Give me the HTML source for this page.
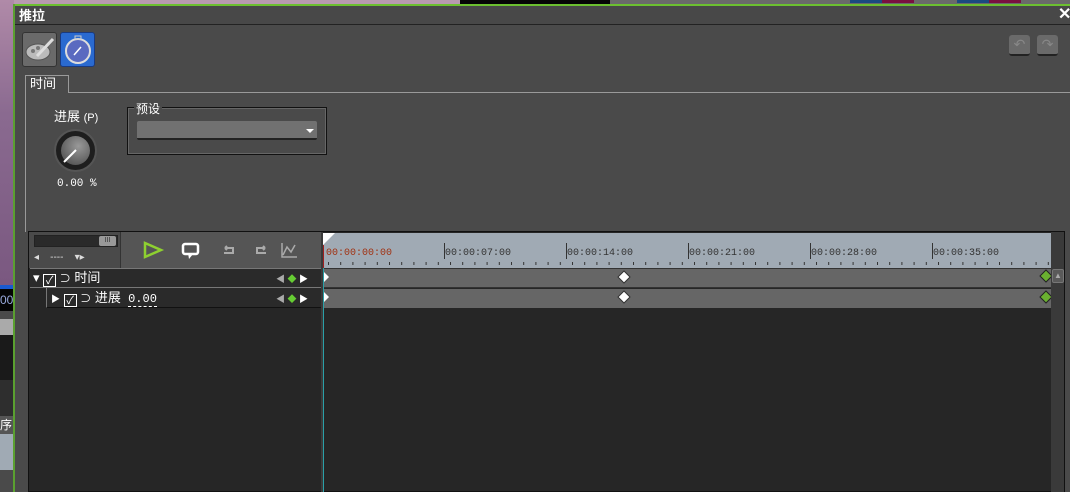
<!DOCTYPE html>
<html><head><meta charset="utf-8"><style>
*{margin:0;padding:0;box-sizing:border-box}
body{width:1070px;height:492px;overflow:hidden;background:#4a4a4a;position:relative;font-family:"Liberation Sans","Noto Sans CJK SC",sans-serif;color:#fff;font-size:12px}
.a{position:absolute}
</style></head><body>
<div class="a" style="left:0;top:0;width:460px;height:5px;background:#b89ab0"></div>
<div class="a" style="left:460px;top:0;width:150px;height:5px;background:#050505"></div>
<div class="a" style="left:610px;top:0;width:460px;height:5px;background:#6a6a6a"></div>
<div class="a" style="left:850px;top:0;width:32px;height:3px;background:#1a4a80"></div>
<div class="a" style="left:882px;top:0;width:32px;height:3px;background:#7a1040"></div>
<div class="a" style="left:957px;top:0;width:32px;height:3px;background:#1a4a80"></div>
<div class="a" style="left:989px;top:0;width:32px;height:3px;background:#7a1040"></div>
<div class="a" style="left:0;top:0;width:14px;height:285px;background:linear-gradient(#b08aa8,#8a6a90 40%,#7a5880)"></div>
<div class="a" style="left:0;top:285px;width:14px;height:4px;background:#1a5ad0"></div>
<div class="a" style="left:0;top:289px;width:14px;height:22px;background:#050505;color:#9ad;font-size:12px;line-height:22px">00</div>
<div class="a" style="left:0;top:311px;width:14px;height:8px;background:#4a4a4a"></div>
<div class="a" style="left:0;top:319px;width:14px;height:16px;background:#aaa"></div>
<div class="a" style="left:0;top:335px;width:14px;height:45px;background:#1a1a1a"></div>
<div class="a" style="left:0;top:380px;width:14px;height:36px;background:#2e2e2e"></div>
<div class="a" style="left:0;top:416px;width:14px;height:18px;background:#555;font-size:12px">序</div>
<div class="a" style="left:0;top:434px;width:14px;height:36px;background:#a0aab4"></div>
<div class="a" style="left:0;top:470px;width:14px;height:22px;background:#4a4a4a"></div>
<div class="a" style="left:13px;top:4px;width:1057px;height:2px;background:#6cc030"></div>
<div class="a" style="left:13px;top:4px;width:2px;height:488px;background:#5aa030"></div>
<div class="a" style="left:15px;top:6px;width:1055px;height:19px;background:#484848;border-bottom:1px solid #222"></div>
<div class="a" style="left:19px;top:6px;font-weight:bold;font-size:13px;line-height:19px">推拉</div>
<div class="a" style="left:1058px;top:5px;font-weight:bold;font-size:16px;line-height:19px">✕</div>
<div class="a" style="left:22px;top:32px;width:35px;height:35px;background:#6a6a6a;border:1px solid #333;border-radius:3px">
<svg width="33" height="33"><ellipse cx="15" cy="19" rx="12" ry="8" fill="#bbb" stroke="#555"/><circle cx="10" cy="18" r="2" fill="#777"/><circle cx="15" cy="15" r="2" fill="#777"/><line x1="14" y1="23" x2="30" y2="6" stroke="#ddd" stroke-width="3"/></svg></div>
<div class="a" style="left:60px;top:32px;width:35px;height:35px;background:#2a6ad0;border:1px solid #1a3a80;border-radius:3px">
<svg width="33" height="33"><circle cx="17" cy="18" r="12" fill="#5a6ac0" stroke="#ddd" stroke-width="2"/><line x1="13" y1="22" x2="20" y2="14" stroke="#fff" stroke-width="1.5"/><rect x="14" y="3" width="6" height="3" fill="none" stroke="#ccc"/></svg></div>
<div class="a" style="left:1009px;top:35px;width:21px;height:21px;background:#6a6a6a;border-radius:3px;border-bottom:2px solid #222;color:#888;text-align:center;font-size:14px;line-height:19px">↶</div>
<div class="a" style="left:1037px;top:35px;width:21px;height:21px;background:#6a6a6a;border-radius:3px;border-bottom:2px solid #222;color:#888;text-align:center;font-size:14px;line-height:19px">↷</div>
<div class="a" style="left:25px;top:92px;width:1045px;height:1px;background:#9a9a9a"></div>
<div class="a" style="left:25px;top:75px;width:44px;height:18px;background:#4a4a4a;border:1px solid #9a9a9a;border-bottom:none;padding-left:4px;line-height:16px;font-size:13px">时间</div>
<div class="a" style="left:25px;top:93px;width:1px;height:139px;background:#9a9a9a"></div>
<div class="a" style="left:54px;top:106px;font-size:13px">进展 <span style="font-size:11px">(P)</span></div>
<div class="a" style="left:54px;top:129px;width:43px;height:43px;border-radius:50%;background:#1e1e1e;border:2px solid #555"></div>
<div class="a" style="left:61px;top:136px;width:29px;height:29px;border-radius:50%;background:radial-gradient(circle at 60% 35%,#999,#444)"></div>
<svg class="a" style="left:54px;top:129px" width="43" height="43"><line x1="10" y1="33" x2="22" y2="21" stroke="#fff" stroke-width="2"/></svg>
<div class="a" style="left:57px;top:178px;font-family:'Liberation Mono',monospace;font-size:11px">0.00 %</div>
<div class="a" style="left:127px;top:107px;width:200px;height:48px;border:1px solid #111;outline:1px solid #666;outline-offset:-2px"></div>
<div class="a" style="left:134px;top:100px;background:#4a4a4a;padding:0 2px;font-size:12px">预设</div>
<div class="a" style="left:137px;top:121px;width:180px;height:19px;background:#717171;border-radius:2px;border-bottom:2px solid #222"></div>
<div class="a" style="left:306px;top:129px;width:0;height:0;border-left:4px solid transparent;border-right:4px solid transparent;border-top:4px solid #fff"></div>
<div class="a" style="left:28px;top:231px;width:1037px;height:261px;background:#262626;border:1px solid #111"></div>
<div class="a" style="left:29px;top:232px;width:292px;height:36px;background:#555"></div>
<div class="a" style="left:29px;top:232px;width:92px;height:36px;background:#4a4a4a;border-right:1px solid #333"></div>
<div class="a" style="left:34px;top:235px;width:84px;height:12px;background:#2a2a2a;border:1px solid #222"></div>
<div class="a" style="left:99px;top:236px;width:17px;height:10px;background:#999;border-radius:2px;font-size:7px;color:#333;text-align:center;line-height:10px">III</div>
<div class="a" style="left:34px;top:252px;font-size:10px;color:#ddd">◂ &nbsp;&nbsp;&nbsp;----&nbsp;&nbsp;&nbsp; ▾▸</div>
<svg class="a" style="left:140px;top:240px" width="160" height="22">
<path d="M5 3 L21 10 L5 17 Z" fill="none" stroke="#8ed030" stroke-width="2.5"/>
<rect x="43" y="4" width="15" height="10" rx="2" fill="none" stroke="#fff" stroke-width="2.5"/><path d="M48 13 L49 19 L53 14" fill="#fff"/>
<path d="M85 8 h8 v5 h-9 M85 8 l2 -2 M85 8 l2 2" fill="none" stroke="#aaa" stroke-width="2"/>
<path d="M125 8 h-8 v5 h9 M125 8 l-2 -2 M125 8 l-2 2" fill="none" stroke="#aaa" stroke-width="2"/>
<path d="M142 3 v14 h15 M143 15 l4 -8 l4 5 l4 -7" fill="none" stroke="#aaa" stroke-width="1.5"/>
</svg>
<div class="a" style="left:321px;top:232px;width:2px;height:260px;background:#3a3a3a"></div>
<div class="a" style="left:323px;top:233px;width:728px;height:35px;background:#a0aab4"></div>
<svg class="a" style="left:323px;top:233px" width="728" height="35">
<path d="M0 0 H12 L0 12 Z" fill="#fff"/>
<line x1="0.5" y1="12" x2="0.5" y2="35" stroke="#a02020"/>
<g fill="#333" font-family="Liberation Mono,monospace" font-size="10">
<text x="3" y="22" fill="#a03010">00:00:00:00</text>
<text x="122" y="22">00:00:07:00</text><text x="244" y="22">00:00:14:00</text><text x="366" y="22">00:00:21:00</text><text x="488" y="22">00:00:28:00</text><text x="610" y="22">00:00:35:00</text>
</g>
<g stroke="#333"><line x1="121.5" y1="10" x2="121.5" y2="26"/><line x1="243.5" y1="10" x2="243.5" y2="26"/><line x1="365.5" y1="10" x2="365.5" y2="26"/><line x1="487.5" y1="10" x2="487.5" y2="26"/><line x1="609.5" y1="10" x2="609.5" y2="26"/></g>
<pattern id="tk" width="12.2" height="35" patternUnits="userSpaceOnUse" x="5"><rect x="0" y="29" width="1" height="3" fill="#333"/></pattern>
<rect x="0" y="0" width="728" height="35" fill="url(#tk)"/>
</svg>
<div class="a" style="left:1051px;top:232px;width:13px;height:260px;background:#3a3a3a"></div>
<div class="a" style="left:1052px;top:269px;width:12px;height:14px;background:#5a5a5a;border:1px solid #777;border-radius:2px;color:#aaa;font-size:8px;text-align:center;line-height:12px">▲</div>
<div class="a" style="left:30px;top:268px;width:291px;height:20px;background:#2a2a2a;border-top:1px solid #777;border-bottom:1px solid #777"></div>
<div class="a" style="left:46px;top:288px;width:275px;height:20px;background:#2a2a2a;border-left:1px solid #777;border-bottom:1px solid #111"></div>
<div class="a" style="left:323px;top:268px;width:728px;height:20px;background:#666;border-top:1px solid #333;border-bottom:1px solid #333"></div>
<div class="a" style="left:323px;top:289px;width:728px;height:19px;background:#666"></div>
<div class="a" style="left:323px;top:268px;width:1px;height:224px;background:#2aa0a8"></div>
<div class="a" style="left:33px;top:270px;font-size:13px;line-height:16px">▾ <span style="display:inline-block;width:13px;height:13px;border:1px solid #fff;font-size:11px;line-height:12px;text-align:center;vertical-align:-2px">✓</span> <span style="font-size:11px">⊃</span> 时间</div>
<div class="a" style="left:51px;top:290px;font-size:13px;line-height:16px"><span style="font-size:9px">▶</span> <span style="display:inline-block;width:13px;height:13px;border:1px solid #fff;font-size:11px;line-height:12px;text-align:center;vertical-align:-2px">✓</span> <span style="font-size:11px">⊃</span> 进展 &nbsp;<span style="font-family:'Liberation Mono',monospace;font-size:12px;border-bottom:1px dashed #fff">0.00</span></div>
<div class="a" style="left:276px;top:272px;font-size:9px;color:#aaa">◀ <span style="color:#6c3">◆</span> <span style="color:#fff">▶</span></div>
<div class="a" style="left:276px;top:292px;font-size:9px;color:#aaa">◀ <span style="color:#6c3">◆</span> <span style="color:#fff">▶</span></div>
<svg class="a" style="left:323px;top:268px" width="728" height="40">
<path d="M1 4 L6 9 L1 14 Z M1 24 L6 29 L1 34 Z" fill="#fff"/>
<path d="M301 3 L307 9 L301 15 L295 9 Z M301 23 L307 29 L301 35 L295 29 Z" fill="#fff" stroke="#333"/>
<path d="M723 2 L729 8 L723 14 L717 8 Z M723 23 L729 29 L723 35 L717 29 Z" fill="#6ab030" stroke="#222"/>
</svg>
</body></html>
